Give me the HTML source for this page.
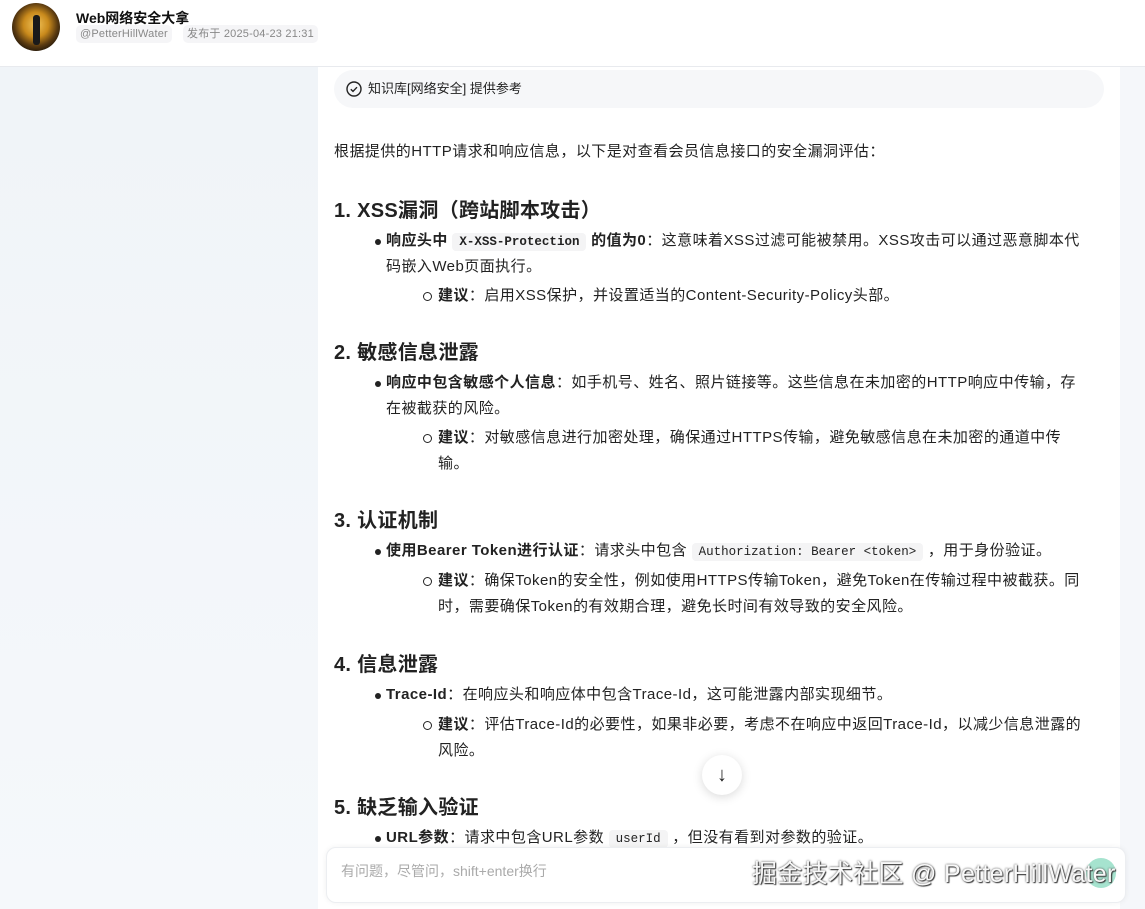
<!DOCTYPE html>
<html><head><meta charset="utf-8"><style>
*{margin:0;padding:0;box-sizing:border-box}
body{width:1145px;height:909px;overflow:hidden;font-family:"Liberation Sans","Noto Sans CJK SC",sans-serif;color:#222;background:#f3f6f9;position:relative}
.top{position:absolute;left:0;top:0;width:1145px;height:67px;background:#fff;border-bottom:1px solid #e8eaee}
.av{position:absolute;left:12px;top:3px;width:48px;height:48px;border-radius:50%;background:radial-gradient(circle at 50% 45%,#f2c45a 0,#c98a1c 35%,#5a3a10 60%,#1a1208 80%)}
.av:after{content:"";position:absolute;left:21px;top:12px;width:7px;height:30px;background:#1a1a1a;border-radius:3px}
.name{position:absolute;left:76px;top:8px;font-size:14px;font-weight:bold;color:#111}
.tag{position:absolute;top:25px;height:18px;line-height:18px;font-size:11px;color:#888;background:#f5f5f7;border-radius:5px;padding:0 4px;letter-spacing:.2px}
.side{position:absolute;left:0;top:67px;width:318px;height:842px;background:linear-gradient(180deg,#f0f4f8,#f5f8fb)}
.main{position:absolute;left:318px;top:67px;width:802px;height:842px;background:#fff}
.right{position:absolute;left:1120px;top:67px;width:25px;height:842px;background:#f5f7fa}
.kb{position:absolute;left:334px;top:70px;width:770px;height:38px;background:#f6f7f9;border-radius:19px;font-size:13px;line-height:38px;padding-left:34px}
.kb svg{position:absolute;left:12px;top:11px}
.t{position:absolute;font-size:15px;line-height:26px;white-space:nowrap;letter-spacing:.45px}
.h{position:absolute;font-size:20px;font-weight:bold;left:334px;letter-spacing:.3px}
b{font-weight:bold}
code{font-family:"Liberation Mono",monospace;font-size:12.5px;background:#f4f4f5;padding:2px 7px;border-radius:4px;letter-spacing:0}
.d1:before{content:"";position:absolute;left:-11px;top:11px;width:6px;height:6px;border-radius:50%;background:#222}
.d2:before{content:"";position:absolute;left:-15px;top:9px;width:7px;height:7px;border-radius:50%;border:1.3px solid #222}
.down{position:absolute;left:702px;top:755px;width:40px;height:40px;border-radius:50%;background:#fff;box-shadow:0 2px 10px rgba(0,0,0,.15);text-align:center;line-height:40px;font-size:20px;font-weight:bold}
.inp{position:absolute;left:326px;top:847px;width:800px;height:56px;background:#fff;border-radius:10px;box-shadow:0 0 6px rgba(0,0,0,.06);border:1px solid #eceef1}
.ph{position:absolute;left:14px;top:13px;font-size:14px;color:#aaa}
.wm{position:absolute;left:752px;top:854px;font-size:25px;color:#f8f8f8;text-shadow:0 0 2px #444,1px 1px 1px #333;white-space:nowrap;letter-spacing:.3px}
.gb{position:absolute;left:1086px;top:858px;width:30px;height:30px;border-radius:50%;background:#a6e3cf}
</style></head><body>
<div class="top"><div class="av"></div><div class="name">Web网络安全大拿</div>
<div class="tag" style="left:76px">@PetterHillWater</div><div class="tag" style="left:183px">发布于 2025-04-23 21:31</div></div>
<div class="side"></div><div class="main"></div><div class="right"></div>
<div class="kb"><svg width="16" height="16" viewBox="0 0 16 16"><circle cx="8" cy="8" r="7" fill="none" stroke="#222" stroke-width="1.4"/><path d="M4.8 8.2l2.2 2.2 4-4.2" fill="none" stroke="#222" stroke-width="1.4"/></svg>知识库[网络安全] 提供参考</div>
<div class="t" style="left:334px;top:139px">根据提供的HTTP请求和响应信息，以下是对查看会员信息接口的安全漏洞评估：</div>
<div class="h" style="top:194px">1. XSS漏洞（跨站脚本攻击）</div>
<div class="t d1" style="left:386px;top:228px"><b>响应头中 <code>X-XSS-Protection</code> 的值为0</b>：这意味着XSS过滤可能被禁用。XSS攻击可以通过恶意脚本代</div>
<div class="t" style="left:386px;top:254px">码嵌入Web页面执行。</div>
<div class="t d2" style="left:438px;top:283px"><b>建议</b>：启用XSS保护，并设置适当的Content-Security-Policy头部。</div>
<div class="h" style="top:336px">2. 敏感信息泄露</div>
<div class="t d1" style="left:386px;top:370px"><b>响应中包含敏感个人信息</b>：如手机号、姓名、照片链接等。这些信息在未加密的HTTP响应中传输，存</div>
<div class="t" style="left:386px;top:396px">在被截获的风险。</div>
<div class="t d2" style="left:438px;top:425px"><b>建议</b>：对敏感信息进行加密处理，确保通过HTTPS传输，避免敏感信息在未加密的通道中传</div>
<div class="t" style="left:438px;top:451px">输。</div>
<div class="h" style="top:504px">3. 认证机制</div>
<div class="t d1" style="left:386px;top:538px"><b>使用Bearer Token进行认证</b>：请求头中包含 <code>Authorization: Bearer &lt;token&gt;</code> ，用于身份验证。</div>
<div class="t d2" style="left:438px;top:568px"><b>建议</b>：确保Token的安全性，例如使用HTTPS传输Token，避免Token在传输过程中被截获。同</div>
<div class="t" style="left:438px;top:594px">时，需要确保Token的有效期合理，避免长时间有效导致的安全风险。</div>
<div class="h" style="top:648px">4. 信息泄露</div>
<div class="t d1" style="left:386px;top:682px"><b>Trace-Id</b>：在响应头和响应体中包含Trace-Id，这可能泄露内部实现细节。</div>
<div class="t d2" style="left:438px;top:712px"><b>建议</b>：评估Trace-Id的必要性，如果非必要，考虑不在响应中返回Trace-Id，以减少信息泄露的</div>
<div class="t" style="left:438px;top:738px">风险。</div>
<div class="down">↓</div>
<div class="h" style="top:791px">5. 缺乏输入验证</div>
<div class="t d1" style="left:386px;top:825px"><b>URL参数</b>：请求中包含URL参数 <code>userId</code> ，但没有看到对参数的验证。</div>
<div class="inp"><div class="ph">有问题，尽管问，shift+enter换行</div></div>
<div class="gb"></div>
<div class="wm">掘金技术社区 @ PetterHillWater</div>
</body></html>
